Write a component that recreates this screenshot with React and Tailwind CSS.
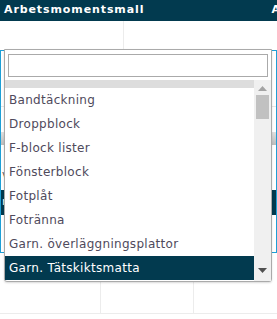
import React from 'react';

const ITEMS = [
  'Bandtäckning',
  'Droppblock',
  'F-block lister',
  'Fönsterblock',
  'Fotplåt',
  'Fotränna',
  'Garn. överläggningsplattor',
  'Garn. Tätskiktsmatta',
];

const font = { fontFamily: '"DejaVu Sans", "Noto Sans", sans-serif' };

function Scrollbar() {
  return (
    <div className="flex w-[17px] flex-col items-center bg-[#f0f0f0]">
      <svg width="9" height="5" viewBox="0 0 9 5" className="mt-[6px]">
        <path d="M0 5 L4.5 0 L9 5 Z" fill="#a3a3a3" />
      </svg>
      <div className="mt-[4px] h-[24px] w-[13px] bg-[#c1c1c1]" />
      <div className="flex-1" />
      <svg width="9" height="5" viewBox="0 0 9 5" className="mb-[8px]">
        <path d="M0 0 L9 0 L4.5 5 Z" fill="#505050" />
      </svg>
    </div>
  );
}

export default function App() {
  return (
    <div className="relative h-[319px] w-[277px] overflow-hidden bg-white" style={font}>
      {/* table behind */}
      <div className="flex h-[21px] items-center justify-between bg-[#023a4f] pl-[4px] text-[11px] font-bold tracking-[0.9px] text-white">
        <span>Arbetsmomentsmall</span>
        <span className="mr-[-4px]">A</span>
      </div>
      <div className="flex h-[29px]">
        <div className="w-[124px] border-r border-[#ececec]" />
      </div>
      <div className="flex h-[203px] flex-col border border-[#1e9fd6]">
        <div className="mt-[55px] h-px bg-[#e6e6e6]" />
        <div className="mt-[25px] h-[13px] bg-gradient-to-b from-[#e0e0e0] to-[#bdbdbd]" />
        <div className="mt-[22px] pl-[1px] text-[11px] text-[#555]">v</div>
        <div className="mt-[6px] flex h-[25px] items-center bg-[#023a4f] pl-[1px] text-[11px] text-white">r</div>
      </div>
      <div className="flex h-[61px] border-b border-[#ececec]">
        <div className="w-[101px] border-r border-[#ececec]" />
        <div className="w-[93px] border-r border-[#ececec]" />
      </div>

      {/* dropdown */}
      <div className="absolute left-[4px] top-[49px] flex h-[233px] w-[268px] flex-col rounded-b-[3px] border border-[#aaaaaa] bg-white shadow-[0_1px_2px_rgba(0,0,0,0.15)]">
        <div className="px-[3px] pt-[4px]">
          <div className="h-[23px] w-[260px] border border-[#aaaaaa] bg-white" />
        </div>
        <div className="mt-[3px] flex flex-1 overflow-hidden">
          <div className="flex flex-1 flex-col">
            <div className="h-[8px] bg-[#dddddd]" />
            {ITEMS.map((it, i) => {
              const sel = i === ITEMS.length - 1;
              return (
                <div
                  key={it}
                  className={
                    sel
                      ? 'flex h-[24px] items-center whitespace-nowrap bg-[#023a4f] pl-[4px] text-[12px] tracking-[0.3px] text-white'
                      : 'flex h-[24px] items-center whitespace-nowrap pl-[4px] text-[12px] tracking-[0.3px] text-[#4f4a5c]'
                  }
                >
                  {it}
                </div>
              );
            })}
          </div>
          <Scrollbar />
        </div>
      </div>
    </div>
  );
}
